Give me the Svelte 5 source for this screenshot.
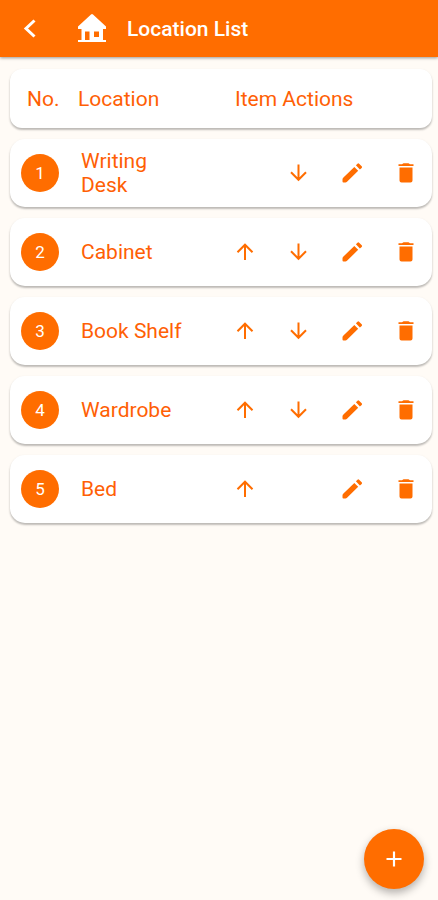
<script>
  let locations = $state(['Writing Desk', 'Cabinet', 'Book Shelf', 'Wardrobe', 'Bed']);

  function move(index, step) {
    const [name] = locations.splice(index, 1);
    locations.splice(index + step, 0, name);
  }

  function rename(index) {
    const name = prompt('Location', locations[index]);
    if (name) locations[index] = name;
  }

  function add() {
    const name = prompt('Location');
    if (name) locations.push(name);
  }
</script>

<div class="page">
  <header>
    <button class="back" aria-label="Back">
      <svg width="24" height="24" viewBox="0 0 24 24"><path d="M16.500 3.500 8 11.500l8.500 8" fill="none" stroke="currentColor" stroke-width="3" /></svg>
    </button>
    <svg class="house" width="30" height="30" viewBox="0 0 30 30" aria-hidden="true">
      <path fill="currentColor" fill-rule="evenodd" d="M14 .5Q15 -.3 16 .5L29 12.500V15H26V26H29V28H1V26H4.500V15H1V12.500ZM8 17.500V26H12.500V17.500ZM17 17.500V23H22V17.500Z" />
    </svg>
    <h1>Location List</h1>
  </header>

  <main>
    <div class="card heading">
      <span class="no">No.</span>
      <span class="place">Location</span>
      <span class="acts">Item Actions</span>
    </div>
    <ol>
      {#each locations as name, i (name)}
        <li class="card row">
          <span class="badge">{i + 1}</span>
          <span class="name">{name}</span>
          <div class="actions">
            {#if i > 0}
              <button class="up" aria-label="Move {name} up" onclick={() => move(i, -1)}>
                <svg width="24" height="24" viewBox="0 0 24 24"><path d="M13 20V5M5.500 12.200 13 4.700l7.500 7.500" fill="none" stroke="currentColor" stroke-width="2" /></svg>
              </button>
            {/if}
            {#if i < locations.length - 1}
              <button class="down" aria-label="Move {name} down" onclick={() => move(i, 1)}>
                <svg width="24" height="24" viewBox="0 0 24 24"><path d="M12.500 3.500V19M5 11.300 12.500 18.800l7.500-7.500" fill="none" stroke="currentColor" stroke-width="2" /></svg>
              </button>
            {/if}
            <button class="edit" aria-label="Edit {name}" onclick={() => rename(i)}>
              <svg width="24" height="24" viewBox="0 0 24 24"><path fill="currentColor" d="M2.500 18.300Q2.500 17.500 3.200 16.800L14.300 5.900l3.900 3.900L7 20.800Q6.300 21.500 5.500 21.500H3.500Q2.500 21.500 2.500 20.500ZM15.900 4.300 17.500 2.700Q18.300 1.900 19.100 2.700L21.700 5.300Q22.500 6.100 21.700 6.900L19.900 8.500Z" /></svg>
            </button>
            <button class="delete" aria-label="Delete {name}" onclick={() => locations.splice(i, 1)}>
              <svg width="24" height="24" viewBox="0 0 24 24"><path fill="currentColor" d="M5.500 6.500H18.500V19.500Q18.500 21.500 16.500 21.500H7.500Q5.500 21.500 5.500 19.500ZM4.500 3.200H8L9.500 2.200H14.500L16 3.200H19.500V5H4.500Z" /></svg>
            </button>
          </div>
        </li>
      {/each}
    </ol>
  </main>

  <button class="fab" aria-label="Add location" onclick={add}>
    <svg width="20" height="20" viewBox="0 0 24 24"><path d="M12 3v18M3 12h18" stroke="currentColor" stroke-width="2.600" /></svg>
  </button>
</div>

<style>
  .page {
    min-height: 100vh;
    background: #fffbf6;
    color: #ff5f05;
    font: 400 21px/24px Roboto, sans-serif;
  }

  button {
    padding: 0;
    border: 0;
    background: none;
    color: inherit;
    cursor: pointer;
  }

  svg {
    display: block;
  }

  header {
    display: flex;
    align-items: center;
    height: 57px;
    padding-left: 18px;
    background: #ff6d00;
    color: #fff;
    box-shadow: 0 1px 3px rgba(0, 0, 0, 0.4);
  }

  .house {
    margin: 0 20px 0 35px;
  }

  h1 {
    margin: 0;
    font-size: 21px;
    font-weight: 500;
  }

  main {
    padding: 12px 6px 12px 10px;
  }

  ol {
    display: grid;
    gap: 11px;
    margin: 11px 0 0;
    padding: 0;
    list-style: none;
  }

  .card {
    display: grid;
    align-items: center;
    box-sizing: border-box;
    border-radius: 15px;
    background: #fff;
    box-shadow: 0 2px 2px rgba(0, 0, 0, 0.22), 0 1px 3px rgba(0, 0, 0, 0.08);
  }

  .heading {
    grid-template-columns: 51px 157px 1fr;
    height: 59px;
    padding-left: 17px;
    border-radius: 12px;
  }

  .row {
    grid-template-columns: 38px 110px 1fr;
    column-gap: 22px;
    min-height: 68px;
    padding: 0 14px 0 11px;
  }

  .badge {
    display: grid;
    place-items: center;
    width: 38px;
    height: 38px;
    border-radius: 50%;
    background: #ff6d00;
    color: #fff;
    font-size: 17px;
  }

  .actions {
    display: grid;
    grid-template-columns: repeat(4, 24px);
    justify-content: end;
    column-gap: 30px;
    color: #ff6d00;
  }

  .up {
    grid-column: 1;
  }

  .down {
    grid-column: 2;
  }

  .edit {
    grid-column: 3;
  }

  .delete {
    grid-column: 4;
  }

  .fab {
    position: fixed;
    right: 14px;
    bottom: 11px;
    display: grid;
    place-items: center;
    width: 60px;
    height: 60px;
    border-radius: 50%;
    background: #ff6d00;
    color: #fff;
    box-shadow: 0 4px 8px rgba(0, 0, 0, 0.3);
  }
</style>
